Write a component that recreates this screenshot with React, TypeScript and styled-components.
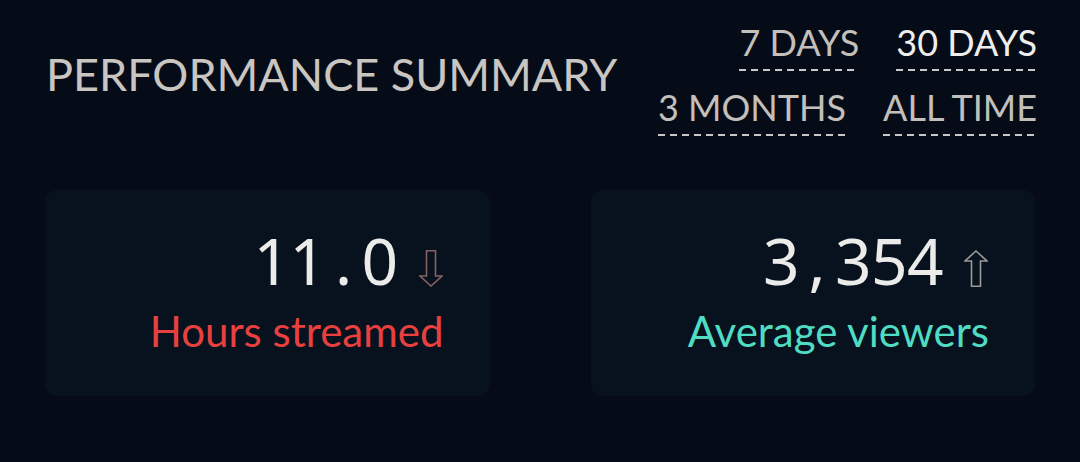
import React from "react";
import styled, { createGlobalStyle } from "styled-components";

const GlobalStyle = createGlobalStyle`
  html, body {
    margin: 0;
    padding: 0;
    background: #060c17;
  }
  body {
    font-family: "Lato", "Noto Sans", sans-serif;
  }
`;

const Page = styled.div`
  width: 1080px;
  height: 462px;
  box-sizing: border-box;
  padding: 24px 45px 0 45px;
  background: #060c17;
`;

const Header = styled.div`
  display: flex;
  justify-content: space-between;
  align-items: flex-start;
`;

const Title = styled.h1`
  margin: 28px 0 0 1px;
  font-family: "Lato", sans-serif;
  font-weight: 400;
  font-size: 45px;
  line-height: 1;
  color: #c9c5c1;
`;

const Ranges = styled.div`
  display: flex;
  flex-direction: column;
  align-items: flex-end;
  gap: 18px;
  margin-right: -2px;
`;

const RangeRow = styled.div`
  display: flex;
  gap: 37px;
`;

const RangeLink = styled.a<{ active?: boolean }>`
  display: inline-block;
  font-family: "Lato", sans-serif;
  font-size: 36px;
  line-height: 1;
  padding-bottom: 11px;
  color: ${props => (props.active ? "#eeeeec" : "#c3bfbb")};
  cursor: pointer;
  background-image: linear-gradient(to right, #c8c8c8 7px, transparent 7px);
  background-size: 12px 2px;
  background-repeat: repeat-x;
  background-position: left bottom;
`;

const Cards = styled.div`
  display: grid;
  grid-template-columns: 1fr 1fr;
  gap: 101px;
  margin-top: 54px;
`;

const Card = styled.div`
  background: #08121e;
  border-radius: 12px;
  height: 206px;
  box-sizing: border-box;
  padding: 39px 46px 0 20px;
  display: flex;
  flex-direction: column;
  align-items: flex-end;
`;

const ValueRow = styled.div`
  display: flex;
  align-items: flex-end;
  gap: 21px;
`;

const Value = styled.div`
  display: flex;
  font-family: "Noto Sans", "Open Sans", sans-serif;
  font-size: 64px;
  line-height: 1;
  color: #ebebea;
`;

const Cell = styled.span`
  display: inline-block;
  width: 36px;
  text-align: center;
`;

const Arrow = styled.svg`
  display: block;
  margin-bottom: 6px;
  margin-right: 1px;
`;

const Label = styled.div<{ tone: "down" | "up" }>`
  margin-top: 17px;
  font-family: "Lato", sans-serif;
  font-size: 42px;
  line-height: 1;
  color: ${props => (props.tone === "down" ? "#e8403f" : "#4fdcc2")};
`;

const DownArrow = () => (
  <Arrow width="24" height="37" viewBox="0 0 24 37">
    <path
      d="M7.5 0.75 H16.5 V26 H23 L12 36 L1 26 H7.5 Z"
      fill="none"
      stroke="#876262"
      strokeWidth="1.6"
    />
  </Arrow>
);

const UpArrow = () => (
  <Arrow width="24" height="37" viewBox="0 0 24 37">
    <path
      d="M12 1 L23 11 H16.5 V36.25 H7.5 V11 H1 Z"
      fill="none"
      stroke="#9a9a98"
      strokeWidth="1.6"
    />
  </Arrow>
);

interface IStat {
  value: string;
  label: string;
  trend: "down" | "up";
}

const stats: IStat[] = [
  { value: "11.0", label: "Hours streamed", trend: "down" },
  { value: "3,354", label: "Average viewers", trend: "up" }
];

const StatCard: React.FunctionComponent<IStat> = ({ value, label, trend }) => (
  <Card>
    <ValueRow>
      <Value>
        {value.split("").map((ch, i) => (
          <Cell key={i}>{ch}</Cell>
        ))}
      </Value>
      {trend === "down" ? <DownArrow /> : <UpArrow />}
    </ValueRow>
    <Label tone={trend}>{label}</Label>
  </Card>
);

const App = () => (
  <>
    <GlobalStyle />
    <Page>
      <Header>
        <Title>PERFORMANCE SUMMARY</Title>
        <Ranges>
          <RangeRow>
            <RangeLink>7 DAYS</RangeLink>
            <RangeLink active>30 DAYS</RangeLink>
          </RangeRow>
          <RangeRow>
            <RangeLink>3 MONTHS</RangeLink>
            <RangeLink>ALL TIME</RangeLink>
          </RangeRow>
        </Ranges>
      </Header>
      <Cards>
        {stats.map(s => (
          <StatCard key={s.label} {...s} />
        ))}
      </Cards>
    </Page>
  </>
);

export default App;
